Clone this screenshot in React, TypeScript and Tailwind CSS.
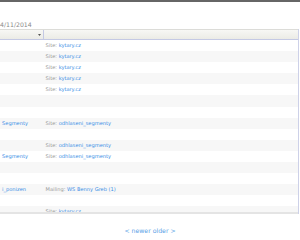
import React from "react";

type Row = { left?: string; leftPad?: string; label?: string; value?: string };

const rows: Row[] = [
  { label: "Site:", value: "kytary.cz" },
  { label: "Site:", value: "kytary.cz" },
  { label: "Site:", value: "kytary.cz" },
  { label: "Site:", value: "kytary.cz" },
  { label: "Site:", value: "kytary.cz" },
  {},
  {},
  { left: "Segmenty", leftPad: "pr-[16px]", label: "Site:", value: "odhlaseni_segmenty" },
  {},
  { label: "Site:", value: "odhlaseni_segmenty" },
  { left: "Segmenty", leftPad: "pr-[16px]", label: "Site:", value: "odhlaseni_segmenty" },
  {},
  {},
  { left: "i_ponizen", leftPad: "pr-[18px]", label: "Mailing:", value: "WS Benny Greb (1)" },
  {},
  { label: "Site:", value: "kytary.cz" },
];

export default function App() {
  return (
    <div className="w-[300px] h-[240px] bg-white overflow-hidden font-['DejaVu_Sans',sans-serif]">
      <div className="h-[2px] bg-[#666666]" />
      <div className="h-[27px] pt-[19px]">
        <div className="text-[6.2px] leading-[7px] text-[#8a8a8a] whitespace-nowrap">4/11/2014</div>
      </div>
      <div className="w-[299px] border-r border-[#cdd1e8]">
        <div className="h-[11px] flex border-t border-[#dcdcd8] border-b border-b-[#c4c9e4] bg-gradient-to-b from-[#f7f7f4] to-[#ebebe6]">
          <div className="w-[44px] border-r border-[#c4c9e4] flex items-center justify-end pr-[2px]">
            <svg width="3" height="2" viewBox="0 0 3 2">
              <path d="M0 0 L3 0 L1.5 2 Z" fill="#555" />
            </svg>
          </div>
          <div className="flex-1" />
        </div>
        <div className="h-[172px] overflow-hidden">
          {rows.map((r, i) => (
            <div
              key={i}
              className={`h-[11.1px] flex items-center text-[5.1px] leading-none whitespace-nowrap ${i % 2 === 1 ? "bg-[#f7f7f7]" : "bg-white"}`}
            >
              <div className={`w-[44px] shrink-0 flex justify-end ${r.leftPad ?? ""}`}>
                {r.left && <span className="text-[#3a8ee6]">{r.left}</span>}
              </div>
              <div className="pl-[1.5px]">
                {r.label && (
                  <>
                    <span className="text-[#9a9a9a]">{r.label} </span>
                    <span className="text-[#3a8ee6]">{r.value}</span>
                  </>
                )}
              </div>
            </div>
          ))}
        </div>
        <div className="h-[2px] bg-[#e4e4e4]" />
      </div>
      <div className="pt-[13px] flex justify-center">
        <div className="text-[6.2px] leading-[8px] text-[#5aa2e6] whitespace-nowrap">
          <span>&lt; newer</span> <span>older &gt;</span>
        </div>
      </div>
    </div>
  );
}
